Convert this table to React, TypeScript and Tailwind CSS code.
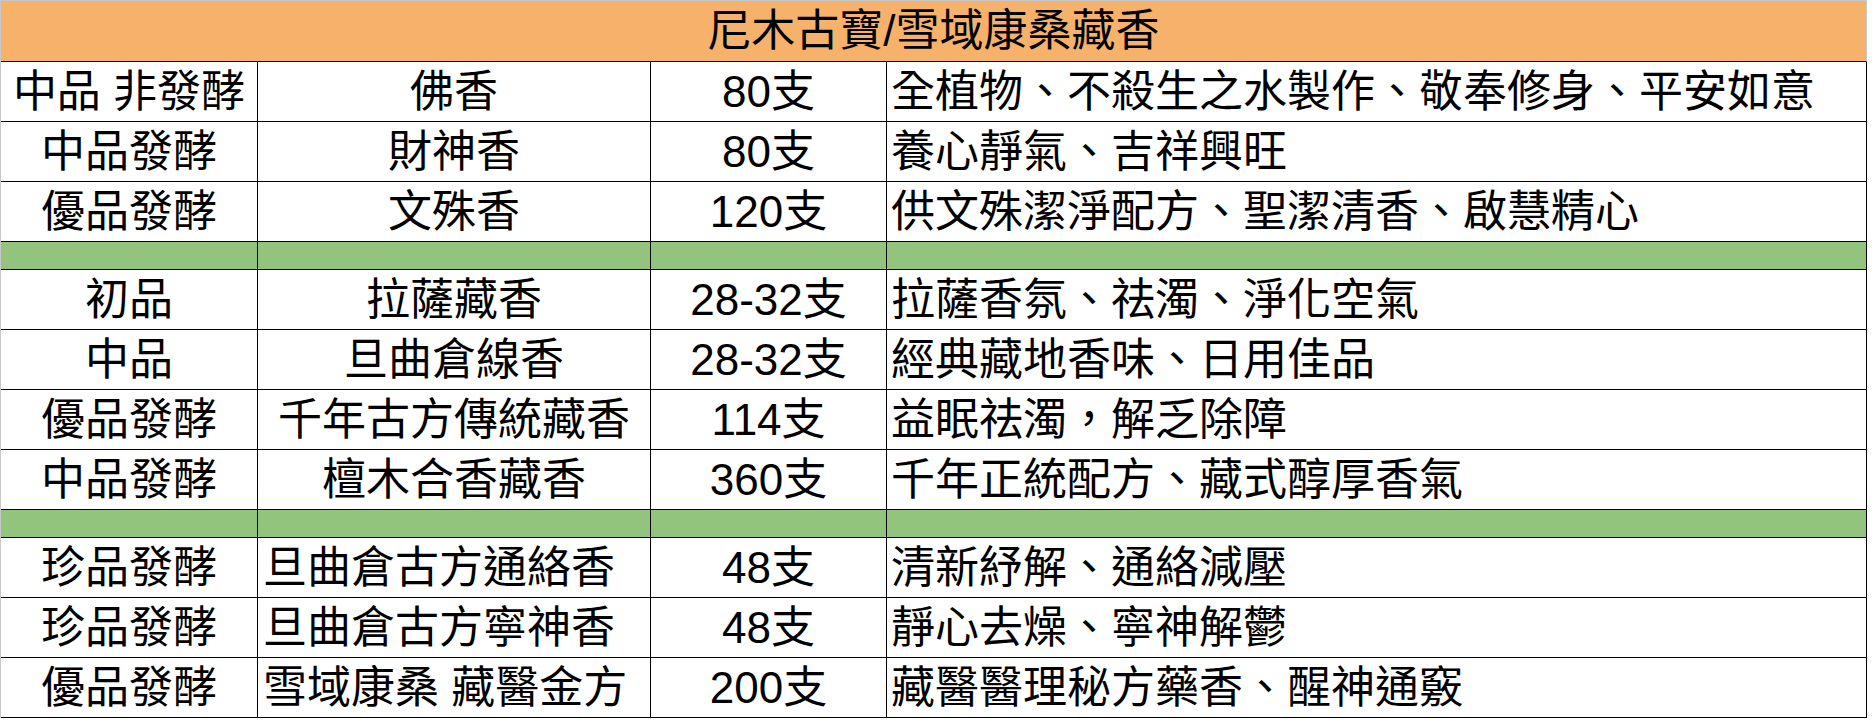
import React from "react";

type Row = { g: string; n: string; c: string; d: string; left?: boolean };

const sec1: Row[] = [
  { g: "中品 非發酵", n: "佛香", c: "80支", d: "全植物、不殺生之水製作、敬奉修身、平安如意" },
  { g: "中品發酵", n: "財神香", c: "80支", d: "養心靜氣、吉祥興旺" },
  { g: "優品發酵", n: "文殊香", c: "120支", d: "供文殊潔淨配方、聖潔清香、啟慧精心" },
];
const sec2: Row[] = [
  { g: "初品", n: "拉薩藏香", c: "28-32支", d: "拉薩香氛、祛濁、淨化空氣" },
  { g: "中品", n: "旦曲倉線香", c: "28-32支", d: "經典藏地香味、日用佳品" },
  { g: "優品發酵", n: "千年古方傳統藏香", c: "114支", d: "益眠祛濁，解乏除障" },
  { g: "中品發酵", n: "檀木合香藏香", c: "360支", d: "千年正統配方、藏式醇厚香氣" },
];
const sec3: Row[] = [
  { g: "珍品發酵", n: "旦曲倉古方通絡香", c: "48支", d: "清新紓解、通絡減壓", left: true },
  { g: "珍品發酵", n: "旦曲倉古方寧神香", c: "48支", d: "靜心去燥、寧神解鬱", left: true },
  { g: "優品發酵", n: "雪域康桑 藏醫金方", c: "200支", d: "藏醫醫理秘方藥香、醒神通竅", left: true },
];

const cell = "border-r border-b border-black flex items-center whitespace-nowrap overflow-hidden";

function DataRow({ r }: { r: Row }) {
  return (
    <>
      <div className={`${cell} h-[60px] justify-center`}>{r.g}</div>
      <div className={`${cell} h-[60px] ${r.left ? "justify-start pl-[5px]" : "justify-center"}`}>{r.n}</div>
      <div className={`${cell} h-[60px] justify-center`}>{r.c}</div>
      <div className={`${cell} h-[60px] justify-start pl-[4px]`}>{r.d}</div>
    </>
  );
}

function GreenRow() {
  return (
    <>
      <div className={`${cell} h-[28px] bg-[#93c47d]`} />
      <div className={`${cell} h-[28px] bg-[#93c47d]`} />
      <div className={`${cell} h-[28px] bg-[#93c47d]`} />
      <div className={`${cell} h-[28px] bg-[#93c47d]`} />
    </>
  );
}

export default function App() {
  return (
    <div className="w-[1872px] h-[720px] bg-white overflow-hidden">
      <div
        className="w-[1867px] border-l border-[#c8c8c8] text-black text-[44px] leading-none"
        style={{ fontFamily: '"Liberation Sans", "Noto Sans CJK TC", sans-serif' }}
      >
        <div className="h-[62px] border-t border-r border-t-[#c8c8c8] border-r-[#c8c8c8] border-b border-b-black bg-[#f6b26b] flex items-center justify-center">
          尼木古寶/雪域康桑藏香
        </div>
        <div className="grid grid-cols-[257px_393px_236px_980px]">
          {sec1.map((r, i) => (
            <DataRow key={"a" + i} r={r} />
          ))}
          <GreenRow />
          {sec2.map((r, i) => (
            <DataRow key={"b" + i} r={r} />
          ))}
          <GreenRow />
          {sec3.map((r, i) => (
            <DataRow key={"c" + i} r={r} />
          ))}
        </div>
      </div>
    </div>
  );
}
